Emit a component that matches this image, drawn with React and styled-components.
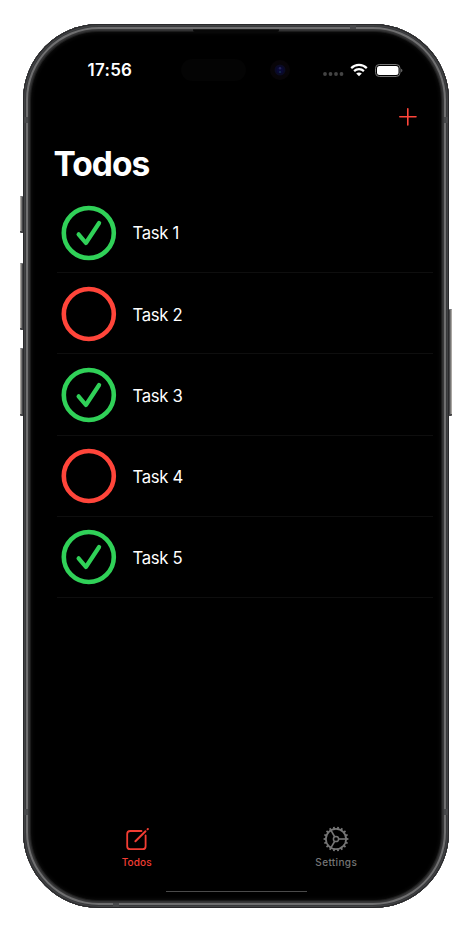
import React from "react";
import styled, { createGlobalStyle, css } from "styled-components";

const GlobalStyle = createGlobalStyle`
  * { box-sizing: border-box; }
  body { margin: 0; background: #fff; font-family: Inter, "Liberation Sans", sans-serif; }
`;

const Page = styled.main`
  width: 473px;
  height: 932px;
  padding: 24px 0 0 23px;
  overflow: hidden;
`;

const Phone = styled.section`
  position: relative;
  width: 426px;
  height: 884px;
  border-radius: 76px;
  background: #000;
  color: #fff;
  display: flex;
  flex-direction: column;
  box-shadow:
    inset 0 0 0 1px #29292b,
    inset 0 0 0 2px #414244,
    inset 0 0 0 3px #38393b,
    inset 0 0 0 5px #6f6f70,
    inset 0 0 0 6px #39393a,
    inset 0 0 0 7px #303031,
    inset 0 0 0 8px #1c1c1c,
    inset 0 0 4px 8px #141414;
`;

const SideButton = styled.span`
  position: absolute;
  top: ${(p) => p.$top}px;
  height: ${(p) => p.$height}px;
  width: 3px;
  ${(p) => (p.$right ? css`right: -3px;` : css`left: -3px;`)}
  background: linear-gradient(to ${(p) => (p.$right ? "left" : "right")}, #aaa7a3 0 1px, #777675 1px 2px, #454547 2px);
  border-top: 1px solid #77777a;
  border-bottom: 2px solid #444446;
  border-radius: ${(p) => (p.$right ? "0 1px 1px 0" : "1px 0 0 1px")};
`;

const AntennaBand = styled.span`
  position: absolute;
  background: #48494b;
  width: ${(p) => (p.$flat ? 6 : 4)}px;
  height: ${(p) => (p.$flat ? 4 : 6)}px;
  ${(p) => p.$place}
`;

const Earpiece = styled.span`
  position: absolute;
  top: 5px;
  left: 170px;
  width: 86px;
  height: 3px;
  border-radius: 0 0 2px 2px;
  background: #080808;
  border-top: 1px solid #1c1c1c;
`;

const StatusBar = styled.header`
  height: 64px;
  padding: 28px 46px 0 64.6px;
  display: flex;
  align-items: center;
`;

const Clock = styled.time`
  width: 93.4px;
  font-size: 17px;
  line-height: 20px;
  font-weight: 600;
  letter-spacing: 0.25px;
`;

const Island = styled.div`
  width: 65px;
  height: 22px;
  border-radius: 11px;
  background: #040404;
  margin-top: -1px;
`;

const Camera = styled.div`
  width: 20px;
  height: 20px;
  margin-left: 24px;
  border-radius: 50%;
  background: #080508;
  display: grid;
  place-items: center;
`;

const Indicators = styled.div`
  margin-left: auto;
  display: flex;
  align-items: center;
`;

const BatterySlot = styled.span`
  display: flex;
  margin-left: 7px;
`;

const Toolbar = styled.div`
  height: 58px;
  padding: 20px 32px 0 0;
  display: flex;
  justify-content: flex-end;
  align-items: flex-start;
`;

const IconButton = styled.button`
  display: flex;
  padding: 0;
  border: 0;
  background: none;
`;

const Title = styled.h1`
  margin: 0;
  padding-left: 30.5px;
  height: 46px;
  font-size: 33.5px;
  line-height: 36px;
  font-weight: 700;
  letter-spacing: -1px;
`;

const TaskList = styled.ul`
  list-style: none;
  margin: 0 16px 0 34px;
  padding: 0;
`;

const TaskRow = styled.li`
  height: 81.2px;
  display: flex;
  align-items: center;
  gap: 15.5px;
  padding: 1px 0 0 4px;
  border-bottom: 1px solid #0e0e0e;
  font-size: 16.7px;
  letter-spacing: -0.3px;
`;

const TaskName = styled.span`
  padding-top: 1.5px;
`;

const TabBar = styled.nav`
  margin-top: auto;
  height: 65.5px;
  padding: 0 13px 0 14px;
  display: grid;
  grid-template-columns: 1fr 1fr;
`;

const Tab = styled.a`
  display: flex;
  flex-direction: column;
  align-items: center;
  gap: 3.5px;
  color: ${(p) => (p.$active ? "#f23d33" : "#767676")};
  font-size: 10px;
  line-height: 14px;
  font-weight: 500;
  letter-spacing: ${(p) => (p.$active ? 0.15 : 0.35)}px;
`;

const HomeIndicator = styled.div`
  width: 141px;
  height: 1px;
  margin: 0 auto 16px;
  background: #4a4a4a;
`;

const GREEN = "#30d158";
const RED = "#ff453a";

function StatusMark({ done }) {
  return (
    <svg width="56" height="56" viewBox="0 0 56 56" fill="none" stroke={done ? GREEN : RED} strokeLinecap="round" strokeLinejoin="round">
      <circle cx="27.8" cy="28" r="25" strokeWidth="4.6" />
      {done && <path d="M17.6 29.3 24.9 38 38.1 18" strokeWidth="4.2" />}
    </svg>
  );
}

function WifiIcon() {
  return (
    <svg width="18" height="14" viewBox="0 0 18 14" fill="none" stroke="#fff" strokeWidth="2.2">
      <path d="M1.2 5.1C5.5.8 12.5.8 16.8 5.1M4.1 8.1c2.8-2.7 7-2.7 9.8 0" />
      <path d="M9 13.3 6.2 10.6c1.6-1.5 4-1.5 5.6 0Z" fill="#fff" stroke="none" />
    </svg>
  );
}

function BatteryIcon() {
  return (
    <svg width="28" height="13" viewBox="0 0 28 13">
      <rect x=".5" y=".5" width="24.5" height="12" rx="3.8" fill="none" stroke="#777" />
      <rect x="2" y="2" width="21.5" height="9" rx="2.5" fill="#fff" />
      <path d="M26.2 4.7c1.6.6 1.6 3 0 3.6Z" fill="#777" />
    </svg>
  );
}

function ComposeIcon() {
  return (
    <svg width="26" height="26" viewBox="0 0 26 26" fill="none" stroke="currentColor" strokeLinecap="round">
      <path d="M17.5 5H6.2Q3.2 5 3.2 8v12.2q0 3 3 3h12.4q3 0 3-3V9.3" strokeWidth="1.8" />
      <path d="m11.4 15.3 10.1-10" strokeWidth="2" />
      <path d="m23.6 3.3.3-.3" strokeWidth="2" />
    </svg>
  );
}

function GearIcon() {
  const teeth = Array.from({ length: 18 }, (_, i) => i * 20);
  return (
    <svg width="26" height="26" viewBox="0 0 26 26" fill="none" stroke="currentColor">
      <circle cx="13" cy="13" r="10.1" strokeWidth="1.7" />
      <circle cx="13" cy="13" r="2.6" strokeWidth="1.5" />
      {teeth.map((a) => (
        <path key={a} d="M23 13h2.4" strokeWidth="1.8" transform={`rotate(${a} 13 13)`} />
      ))}
      {[0, 120, 240].map((a) => (
        <path key={a} d="M15.6 13H23" strokeWidth="1.6" transform={`rotate(${a} 13 13)`} />
      ))}
    </svg>
  );
}

const tasks = [
  { name: "Task 1", done: true },
  { name: "Task 2", done: false },
  { name: "Task 3", done: true },
  { name: "Task 4", done: false },
  { name: "Task 5", done: true },
];

export default function App() {
  return (
    <Page>
      <GlobalStyle />
      <Phone>
        <SideButton $top={172} $height={37} />
        <SideButton $top={239} $height={67} />
        <SideButton $top={324} $height={68} />
        <SideButton $right $top={285} $height={107} />
        <AntennaBand $place="left: 1px; top: 93px;" />
        <AntennaBand $place="right: 1px; top: 93px;" />
        <AntennaBand $place="left: 1px; bottom: 93px;" />
        <AntennaBand $place="right: 1px; bottom: 93px;" />
        <AntennaBand $flat $place="right: 93px; top: 1px;" />
        <AntennaBand $flat $place="left: 90px; bottom: 1px;" />
        <Earpiece />
        <StatusBar>
          <Clock>17:56</Clock>
          <Island />
          <Camera>
            <svg width="12" height="12" viewBox="0 0 12 12">
              <circle cx="6" cy="6" r="5.5" fill="#0b0b24" />
              <circle cx="6" cy="6" r="3.6" fill="#090936" />
              <circle cx="6" cy="4.2" r="1.2" fill="#252558" />
              <circle cx="6" cy="8" r="1" fill="#17304e" />
            </svg>
          </Camera>
          <Indicators>
            <svg width="27" height="14" viewBox="0 0 27 14" fill="#444">
              <circle cx="2" cy="11" r="1.9" />
              <circle cx="7.5" cy="11" r="1.9" />
              <circle cx="13" cy="11" r="1.9" />
              <circle cx="18.5" cy="11" r="1.9" />
            </svg>
            <WifiIcon />
            <BatterySlot>
              <BatteryIcon />
            </BatterySlot>
          </Indicators>
        </StatusBar>
        <Toolbar>
          <IconButton aria-label="Add task">
            <svg width="18" height="18" viewBox="0 0 18 18" stroke="#ff453a" strokeWidth="1.6" strokeLinecap="round">
              <path d="M8.8.8v16.2M.8 8.8h16.2" />
            </svg>
          </IconButton>
        </Toolbar>
        <Title>Todos</Title>
        <TaskList>
          {tasks.map((task) => (
            <TaskRow key={task.name}>
              <StatusMark done={task.done} />
              <TaskName>{task.name}</TaskName>
            </TaskRow>
          ))}
        </TaskList>
        <TabBar>
          <Tab $active>
            <ComposeIcon />
            Todos
          </Tab>
          <Tab>
            <GearIcon />
            Settings
          </Tab>
        </TabBar>
        <HomeIndicator />
      </Phone>
    </Page>
  );
}
